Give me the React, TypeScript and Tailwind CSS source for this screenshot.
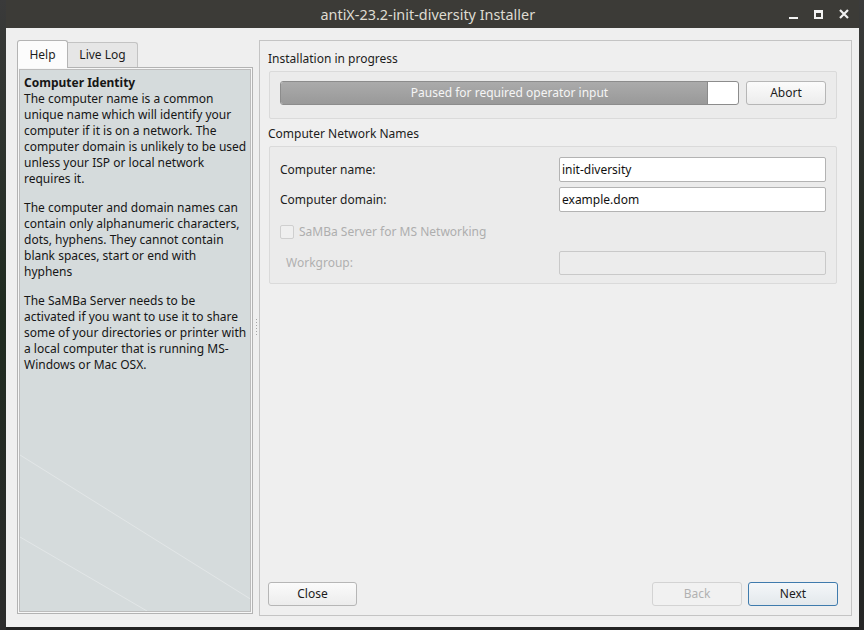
import React from 'react';

const font = { fontFamily: '"Noto Sans", "Open Sans", sans-serif' };

// help text, wrapped the way the original panel wraps it
const HELP = [
  [
    'The computer name is a common',
    'unique name which will identify your',
    'computer if it is on a network. The',
    'computer domain is unlikely to be used',
    'unless your ISP or local network',
    'requires it.',
  ],
  [
    'The computer and domain names can',
    'contain only alphanumeric characters,',
    'dots, hyphens. They cannot contain',
    'blank spaces, start or end with',
    'hyphens',
  ],
  [
    'The SaMBa Server needs to be',
    'activated if you want to use it to share',
    'some of your directories or printer with',
    'a local computer that is running MS-',
    'Windows or Mac OSX.',
  ],
];

function Button({ label, disabled, primary, className = '' }: { label: string; disabled?: boolean; primary?: boolean; className?: string }) {
  return (
    <button
      disabled={disabled}
      className={`h-[24px] rounded-[3px] border text-[12px] leading-[16px] ${
        primary
          ? 'border-[#3f7bad] bg-gradient-to-b from-[#f4f7f9] to-[#e3e8ec] text-[#1c1c1c]'
          : disabled
          ? 'border-[#d3d3d3] bg-[#f1f1f1] text-[#b1b1b1]'
          : 'border-[#b6b6b6] bg-gradient-to-b from-[#fbfbfb] to-[#ececec] text-[#1c1c1c]'
      } ${className}`}
    >
      {label}
    </button>
  );
}

function TitleBar() {
  return (
    <div className="h-[28px] bg-[#3c3b37] flex items-center relative">
      <div className="flex-1 flex justify-center pr-[10px]">
        <span className="text-[15px] text-[#dfdbd2] scale-x-[0.96] whitespace-nowrap">antiX-23.2-init-diversity Installer</span>
      </div>
      <div className="absolute right-[10px] top-0 h-[28px] flex items-center gap-[16px]">
        <div className="w-[9px] h-[10px] flex items-end"><div className="w-[9px] h-[2px] bg-[#f2f2f2]" /></div>
        <div className="w-[9px] h-[9px] border-2 border-[#f2f2f2] border-t-[3px]" />
        <svg width="10" height="10" viewBox="0 0 10 10">
          <path d="M1 1 L9 9 M9 1 L1 9" stroke="#f2f2f2" strokeWidth="2.2" />
        </svg>
      </div>
    </div>
  );
}

function HelpPanel() {
  return (
    <div className="w-[236px] flex flex-col">
      <div className="flex items-end h-[28px]">
        <div className="w-[51px] h-[28px] border border-b-0 border-[#b4b4b4] rounded-t-[3px] bg-[#fcfcfc] flex items-center justify-center text-[12px] text-[#1c1c1c] -mb-[1px] relative z-10">
          Help
        </div>
        <div className="w-[70px] h-[25px] border border-l-0 border-b-0 border-[#c3c3c3] rounded-tr-[3px] bg-[#e6e6e6] flex items-center justify-center text-[12px] text-[#1c1c1c]">
          Live Log
        </div>
      </div>
      <div className="h-[547px] border border-[#b3b3b3] bg-[#f7f7f7] p-[1px]">
        <div className="relative h-full border border-[#bcbcbc] bg-[#d5dbdc] pl-[4px] pt-[5px] text-[12px] leading-[16px] text-[#161616] overflow-hidden">
          <svg className="absolute left-0 bottom-0" width="232" height="160" viewBox="0 0 232 160">
            <path d="M0 4 L232 149" stroke="#e2e6e7" strokeWidth="1" fill="none" />
            <path d="M0 86 L127 160" stroke="#e2e6e7" strokeWidth="1" fill="none" />
          </svg>
          <div className="relative whitespace-nowrap">
            <div className="font-bold">Computer Identity</div>
            {HELP.map((lines, i) => (
              <div key={i} className={i === 0 ? '' : 'mt-[13px]'}>
                {lines.map((l) => (
                  <div key={l}>{l}</div>
                ))}
              </div>
            ))}
          </div>
        </div>
      </div>
    </div>
  );
}

function Splitter() {
  return (
    <div className="w-[6px] flex items-center justify-center">
      <div className="flex flex-col gap-[2px] mt-[-12px]">
        {[0, 1, 2, 3, 4, 5].map((i) => (
          <div key={i} className="w-[1px] h-[1px] bg-[#a5a5a5]" />
        ))}
      </div>
    </div>
  );
}

function FieldRow({ label, value }: { label: string; value: string }) {
  return (
    <div className="flex items-center h-[25px]">
      <span className="flex-1 text-[12px] text-[#1c1c1c]">{label}</span>
      <div className="w-[267px] h-[25px] rounded-[2px] border border-[#b3b3b3] bg-white flex items-center pl-[2px] text-[12px] text-[#111]">
        {value}
      </div>
    </div>
  );
}

function MainFrame() {
  return (
    <div className="mt-[1px] w-[593px] h-[576px] border border-[#c4c4c4] flex flex-col pl-[9px] pr-[14px] pb-[9px]">
      <div className="pt-[10px] text-[12px] leading-[16px] text-[#1c1c1c] -ml-[1px]">Installation in progress</div>
      <div className="mt-[4px] h-[48px] border border-[#dadada] rounded-[2px] bg-[#ebebeb] px-[10px] pt-[9px] flex gap-[7px]">
        <div className="relative flex-1 h-[24px] rounded-[3px] border border-[#8c8c8c] bg-white flex overflow-hidden">
          <div className="w-[427px] h-full bg-gradient-to-b from-[#ababab] to-[#999] border-r border-[#8a8a8a]" />
          <div className="absolute inset-0 flex items-center justify-center text-[12px] text-[#f5f5f5]">
            Paused for required operator input
          </div>
        </div>
        <Button label="Abort" className="w-[80px]" />
      </div>

      <div className="mt-[7px] text-[12px] leading-[16px] text-[#1c1c1c] -ml-[1px]">Computer Network Names</div>
      <div className="mt-[4px] h-[138px] border border-[#dadada] rounded-[2px] bg-[#ebebeb] px-[10px] pt-[10px] flex flex-col">
        <FieldRow label="Computer name:" value="init-diversity" />
        <div className="mt-[5px]">
          <FieldRow label="Computer domain:" value="example.dom" />
        </div>
        <div className="mt-[11px] flex items-center gap-[5px]">
          <div className="w-[14px] h-[14px] rounded-[2px] border border-[#cfcfcf] bg-[#efefef]" />
          <span className="text-[12px] text-[#aeaeae]">SaMBa Server for MS Networking</span>
        </div>
        <div className="mt-[10px] flex items-center h-[24px]">
          <span className="flex-1 pl-[6px] text-[12px] text-[#b0b0b0]">Workgroup:</span>
          <div className="w-[267px] h-[24px] rounded-[2px] border border-[#c9c9c9] bg-[#ececec]" />
        </div>
      </div>

      <div className="mt-auto flex items-center -mr-[1px]">
        <Button label="Close" className="w-[89px] -ml-[1px]" />
        <div className="flex-1" />
        <Button label="Back" disabled className="w-[90px]" />
        <Button label="Next" primary className="w-[90px] ml-[6px]" />
      </div>
    </div>
  );
}

export default function App() {
  return (
    <div className="w-[864px] h-[630px] bg-[#222] flex overflow-hidden" style={font}>
      <div className="w-[6px] h-full bg-gradient-to-b from-[#3a3a3a] via-[#1f2a1f] to-[#2b2b2b]" />
      <div className="w-[853px] h-[627px] flex flex-col">
        <TitleBar />
        <div className="flex-1 bg-[#efefef] flex pl-[11px] pt-[11px]">
          <HelpPanel />
          <Splitter />
          <MainFrame />
        </div>
      </div>
      <div className="flex-1 h-full bg-gradient-to-b from-[#3b3b3b] via-[#1d251c] to-[#262626]" />
    </div>
  );
}
